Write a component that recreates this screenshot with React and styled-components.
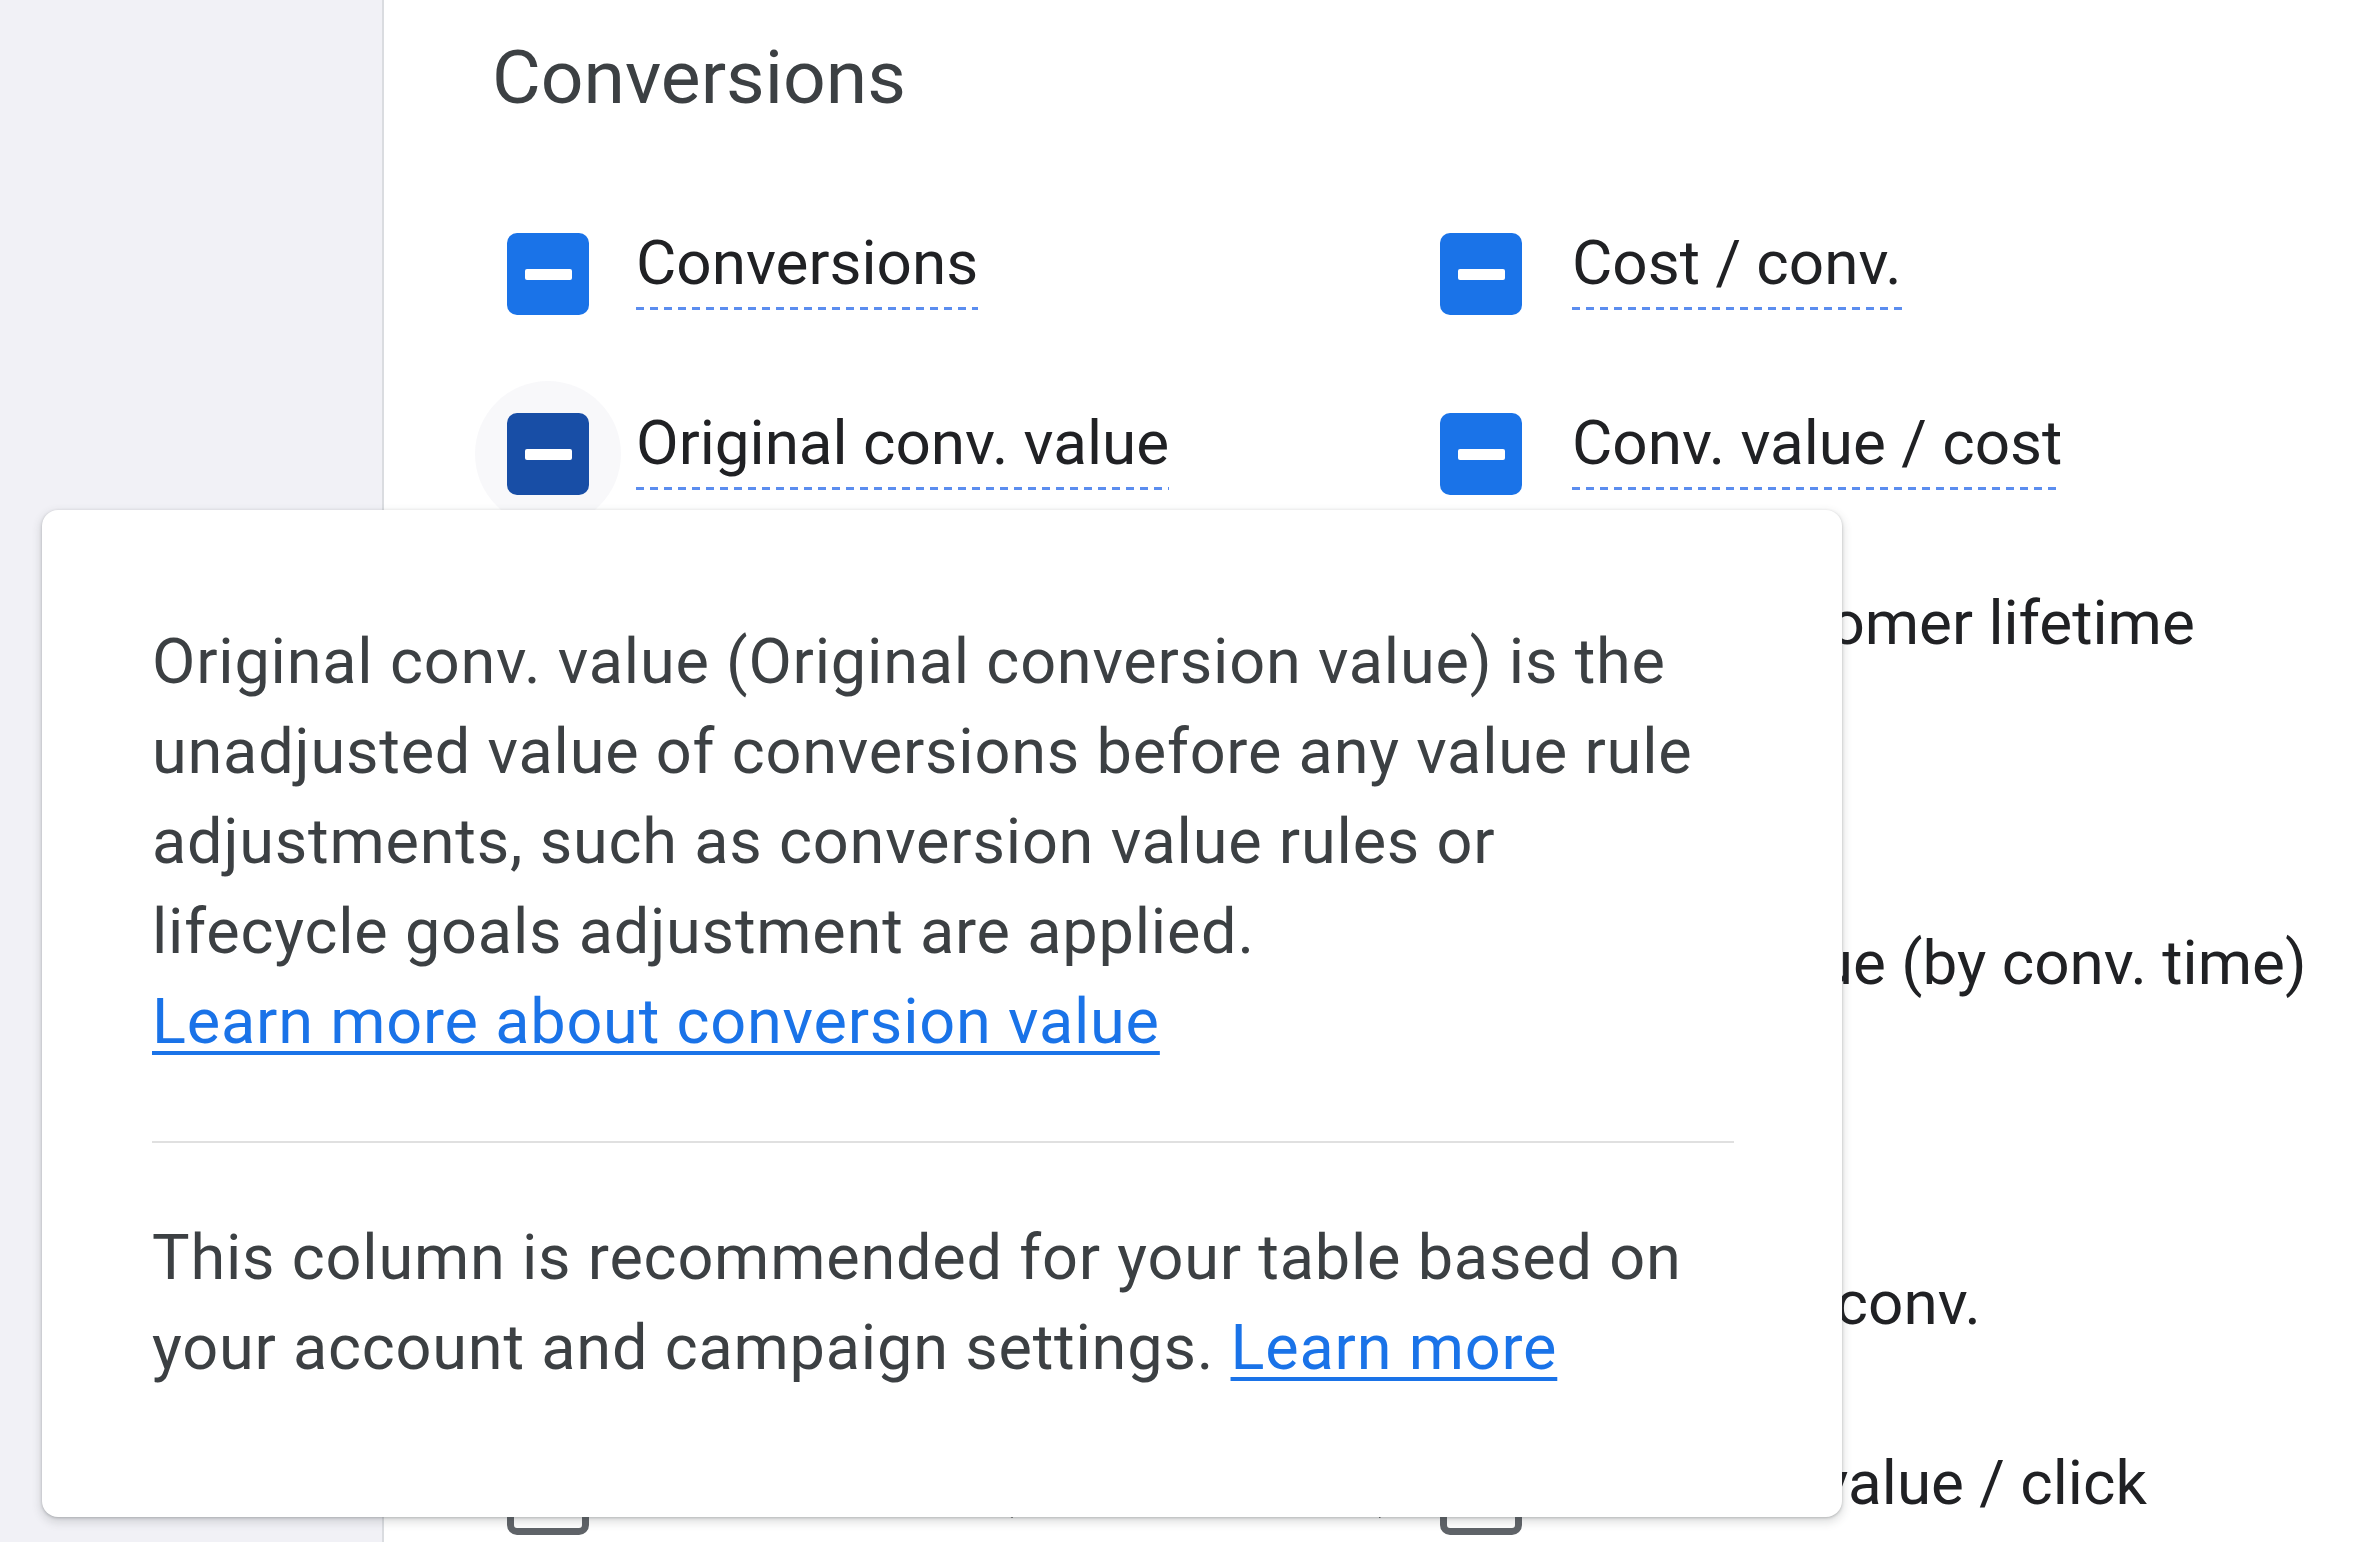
import styled, { createGlobalStyle } from "styled-components";

const GlobalStyle = createGlobalStyle`
  html, body {
    margin: 0;
    height: 100%;
    overflow: hidden;
  }
  body {
    font-family: Roboto, "Liberation Sans", Arial, sans-serif;
    background: #fff;
  }
`;

const Page = styled.div`
  position: relative;
  display: flex;
  height: 100vh;
`;

const Sidebar = styled.aside`
  width: 382px;
  flex-shrink: 0;
  background: #f1f1f6;
  border-right: 2px solid #dadce0;
`;

const Main = styled.main`
  flex: 1;
  padding: 32px 0 0 108px;
  background: #fff;
`;

const Heading = styled.h2`
  margin: 0 0 99px;
  font-size: 75px;
  line-height: 90px;
  font-weight: 400;
  color: #3c4043;
`;

const Grid = styled.div`
  display: grid;
  grid-template-columns: 933px 897px;
  grid-template-rows: 180px 180px 170px 170px 170px 170px 180px auto;
  margin-left: 15px;
`;

const Item = styled.label`
  position: relative;
  isolation: isolate;
  display: flex;
  align-items: flex-start;
  gap: ${({ $right }) => ($right ? "50px" : "47px")};
`;

const boxColor = { on: "#1a73e8", hover: "#184ea6" };

const Box = styled.span`
  position: relative;
  flex-shrink: 0;
  box-sizing: border-box;
  width: 82px;
  height: 82px;
  margin-top: 12px;
  border-radius: 10px;
  display: flex;
  align-items: center;
  justify-content: center;
  background: ${({ $state }) => boxColor[$state] || "#fff"};
  border: ${({ $state }) => (boxColor[$state] ? "none" : "7px solid #5f6368")};

  &::before {
    content: "";
    display: ${({ $state }) => ($state === "hover" ? "block" : "none")};
    position: absolute;
    left: 50%;
    top: 50%;
    width: 146px;
    height: 146px;
    transform: translate(-50%, -50%);
    border-radius: 50%;
    background: rgba(60, 64, 110, 0.035);
    z-index: -1;
  }
`;

const Dash = styled.span`
  width: 47px;
  height: 11px;
  border-radius: 2px;
  background: #fff;
`;

const Label = styled.span`
  font-size: 62px;
  line-height: 84px;
  color: #202124;
  padding-bottom: 5px;
  background: ${({ $hint }) =>
    $hint
      ? "linear-gradient(to right, #5b8def 58%, transparent 0) left bottom / 14px 3px repeat-x"
      : "none"};
`;

const Tooltip = styled.div`
  position: absolute;
  left: 42px;
  top: 510px;
  width: 1800px;
  box-sizing: border-box;
  padding: 107px 108px 124px 110px;
  background: #fff;
  border-radius: 16px;
  box-shadow: 0 4px 8px 2px rgba(60, 64, 67, 0.15),
    0 1px 3px rgba(60, 64, 67, 0.3);
  font-size: 63px;
  line-height: 90px;
  letter-spacing: 0.8px;
  color: #3c4043;
  z-index: 2;
`;

const Para = styled.p`
  margin: 0;
`;

const Divider = styled.hr`
  margin: 74px 0 70px;
  border: 0;
  height: 2px;
  background: #e0e0e0;
`;

const Link = styled.a`
  color: #1a73e8;
  text-decoration: underline;
  text-decoration-thickness: 4px;
  text-underline-offset: 8px;
`;

const rows = [
  [
    { text: "Conversions", state: "on", hint: true },
    { text: "Cost / conv.", state: "on", hint: true },
  ],
  [
    { text: "Original conv. value", state: "hover", hint: true },
    { text: "Conv. value / cost", state: "on", hint: true },
  ],
  [{ text: "Conv. rate" }, { text: "New customer lifetime value" }],
  [{ text: "Conv. value" }, { text: "Results" }],
  [{ text: "Value / conv." }, { text: "Conv. value (by conv. time)" }],
  [{ text: "All conv. value" }, { text: "All conv." }],
  [{ text: "Cross-device conv." }, { text: "Cost / all conv." }],
  [{ text: "Conversions (by conv. time)" }, { text: "All conv. value / click" }],
];

const App = () => {
  return (
    <Page>
      <GlobalStyle />
      <Sidebar />
      <Main>
        <Heading>Conversions</Heading>
        <Grid>
          {rows.map((pair) =>
            pair.map((item, col) => (
              <Item key={item.text} $right={col === 1}>
                <Box $state={item.state}>{item.state && <Dash />}</Box>
                <Label $hint={item.hint}>{item.text}</Label>
              </Item>
            ))
          )}
        </Grid>
      </Main>

      <Tooltip>
        <Para>
          Original conv. value (Original conversion value) is the unadjusted
          value of conversions before any value rule adjustments, such as
          conversion value rules or lifecycle goals adjustment are applied.
          <br />
          <Link href="#">Learn more about conversion value</Link>
        </Para>
        <Divider />
        <Para>
          This column is recommended for your table based on your account and
          campaign settings. <Link href="#">Learn more</Link>
        </Para>
      </Tooltip>
    </Page>
  );
};

export default App;
